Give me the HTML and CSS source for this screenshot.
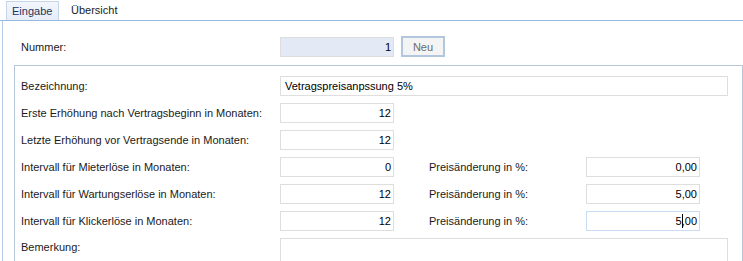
FILE: index.html
```html
<!DOCTYPE html>
<html lang="de">
<head>
<meta charset="utf-8">
<title>Eingabe</title>
<link rel="stylesheet" href="styles.css">
</head>
<body>
<div class="tabs">
  <div class="tab active">Eingabe</div>
  <div class="tab">Übersicht</div>
</div>
<div class="panel">
  <div class="num-row">
    <div class="label">Nummer:</div>
    <div class="field num readonly">1</div>
    <div class="btn">Neu</div>
  </div>
  <div class="group">
    <div class="grid">
      <div class="label">Bezeichnung:</div>
      <div class="field wide">Vetragspreisanpssung 5%</div>

      <div class="label">Erste Erhöhung nach Vertragsbeginn in Monaten:</div>
      <div class="field num">12</div>
      <div class="fill"></div>

      <div class="label">Letzte Erhöhung vor Vertragsende in Monaten:</div>
      <div class="field num">12</div>
      <div class="fill"></div>

      <div class="label">Intervall für Mieterlöse in Monaten:</div>
      <div class="field num">0</div>
      <div class="label plabel">Preisänderung in %:</div>
      <div class="field num">0,00</div>
      <div class="end"></div>

      <div class="label">Intervall für Wartungserlöse in Monaten:</div>
      <div class="field num">12</div>
      <div class="label plabel">Preisänderung in %:</div>
      <div class="field num">5,00</div>
      <div class="end"></div>

      <div class="label">Intervall für Klickerlöse in Monaten:</div>
      <div class="field num">12</div>
      <div class="label plabel">Preisänderung in %:</div>
      <div class="field num focus">5<span class="caret"></span>,00</div>
      <div class="end"></div>

      <div class="label top">Bemerkung:</div>
      <div class="field wide memo"></div>
    </div>
  </div>
</div>
</body>
</html>
```
FILE: styles.css
```css
html, body {
  margin: 0;
  padding: 0;
  background: #ffffff;
  font-family: "Liberation Sans", Arial, sans-serif;
  font-size: 11px;
  color: #1a1a1a;
  overflow: hidden;
}

.tabs {
  display: flex;
  align-items: flex-end;
  height: 20px;
  border-bottom: 1px solid #99b8e0;
  padding-left: 6px;
}

.tab {
  height: 19px;
  line-height: 18px;
  padding: 0 6px 0 12px;
  box-sizing: border-box;
  color: #1a1a1a;
}

.tab.active {
  padding: 0 6px 0 5px;
  width: 53px;
  border: 1px solid #c6d6ea;
  border-bottom: none;
  background: linear-gradient(#f3f7fc, #e6eef8);
  color: #1e3560;
}

.panel {
  margin-left: 2px;
  border-left: 1px solid #b3c8e6;
  height: 240px;
  padding-top: 15px;
  box-sizing: border-box;
}

.num-row {
  display: flex;
  align-items: center;
  height: 21px;
  padding-left: 18px;
}

.num-row .label {
  width: 259px;
}

.label {
  display: flex;
  align-items: center;
  white-space: nowrap;
}

.label.top {
  grid-column: 1;
  align-items: flex-start;
  padding-top: 3px;
}

.plabel {
  grid-column: 4;
}

.end {
  grid-column: 6;
}

.field {
  box-sizing: border-box;
  height: 20px;
  border: 1px solid #dedede;
  background: #ffffff;
  color: #000000;
  display: flex;
  align-items: center;
  padding: 0 4px;
  white-space: nowrap;
}

.field.num {
  width: 114px;
  justify-content: flex-end;
  padding-right: 2px;
}

.field.readonly {
  background: #e3eaf6;
  border-color: #dddddd;
}

.field.focus {
  border-color: #c9ddf2;
}

.caret {
  display: inline-block;
  width: 1px;
  height: 14px;
  background: #000000;
  margin: 0 -1px 0 0;
}

.btn {
  box-sizing: border-box;
  margin-left: 7px;
  width: 44px;
  height: 21px;
  border: 2px solid #b3c6e0;
  background: #f4f4f4;
  color: #6a6a6a;
  display: flex;
  align-items: center;
  justify-content: center;
}

.group {
  margin: 8px 0 0 11px;
  width: 729px;
  box-sizing: border-box;
  border: 1px solid #b7c7d8;
  border-bottom: none;
  padding: 10px 0 0 6px;
  height: 196px;
}

.grid {
  display: grid;
  grid-template-columns: 259px 114px 35px 157px 114px 28px;
  grid-auto-rows: 20px;
  row-gap: 7px;
}

.fill {
  grid-column: 3 / 7;
}

.field.wide {
  grid-column: 2 / 7;
}

.field.memo {
  height: 23px;
  border-bottom: none;
}
```
